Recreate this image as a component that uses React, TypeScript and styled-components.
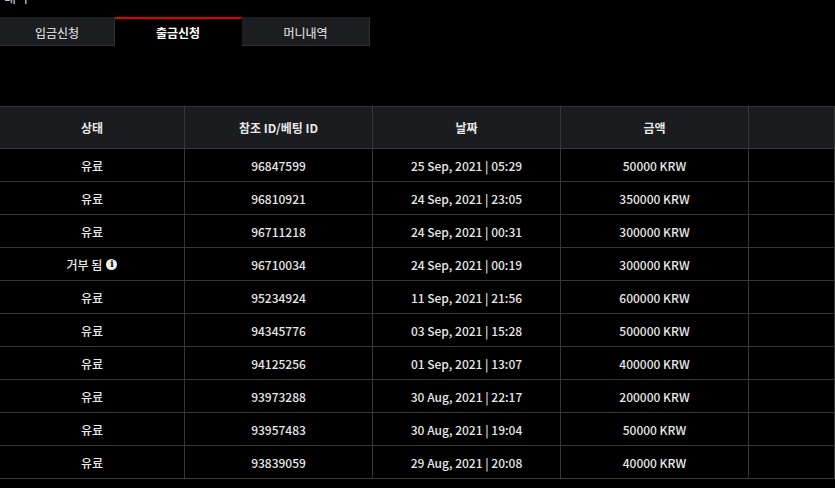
import React from "react";
import styled, { createGlobalStyle } from "styled-components";

const Global = createGlobalStyle`
  body {
    margin: 0;
    background: #000;
    font-family: "Noto Sans CJK KR", "Noto Sans", sans-serif;
    color: #e6e6e6;
  }
`;

const Title = styled.div`
  overflow: hidden;
  font-size: 13px;
  line-height: 1;
  margin-top: -10px;
  padding-left: 4px;
  height: 27px;
  color: #ddd;
`;

const Tabs = styled.div`
  display: flex;
  height: 29px;
  background: #000;
`;

const Tab = styled.div<{ $active?: boolean; $w: number }>`
  width: ${({ $w }) => $w}px;
  box-sizing: border-box;
  display: flex;
  align-items: center;
  justify-content: center;
  font-size: 12px;
  font-weight: ${({ $active }) => ($active ? 700 : 500)};
  color: ${({ $active }) => ($active ? "#fff" : "#d0d0d0")};
  background: ${({ $active }) => ($active ? "#000" : "#1c1d21")};
  border-top: 2px solid ${({ $active }) => ($active ? "#e00000" : "#1c1d21")};
  border-right: 1px solid ${({ $active }) => ($active ? "transparent" : "#333")};
  border-bottom: 1px solid ${({ $active }) => ($active ? "#000" : "#333")};
`;

const Spacer = styled.div`
  height: 60px;
`;

const Table = styled.div`
  display: grid;
  grid-template-columns: 185px 188px 188px 188px 1fr;
`;

const Cell = styled.div<{ $head?: boolean }>`
  box-sizing: border-box;
  height: ${({ $head }) => ($head ? 43 : 33)}px;
  display: flex;
  align-items: center;
  justify-content: center;
  gap: 4px;
  font-size: 12px;
  font-weight: ${({ $head }) => ($head ? 700 : 500)};
  background: ${({ $head }) => ($head ? "#1b1c20" : "#000")};
  color: #e8e8e8;
  border-bottom: 1px solid #363636;
  border-right: 1px solid #363636;
  border-top: ${({ $head }) => ($head ? "1px solid #363636" : "none")};
`;

const Info = styled.span`
  width: 11px;
  height: 11px;
  border-radius: 50%;
  background: #eee;
  color: #000;
  font-size: 9px;
  font-weight: 700;
  font-family: "DejaVu Serif", serif;
  display: inline-flex;
  align-items: center;
  justify-content: center;
`;

const rows: [string, string, string, string][] = [
  ["유료", "96847599", "25 Sep, 2021 | 05:29", "50000 KRW"],
  ["유료", "96810921", "24 Sep, 2021 | 23:05", "350000 KRW"],
  ["유료", "96711218", "24 Sep, 2021 | 00:31", "300000 KRW"],
  ["거부 됨", "96710034", "24 Sep, 2021 | 00:19", "300000 KRW"],
  ["유료", "95234924", "11 Sep, 2021 | 21:56", "600000 KRW"],
  ["유료", "94345776", "03 Sep, 2021 | 15:28", "500000 KRW"],
  ["유료", "94125256", "01 Sep, 2021 | 13:07", "400000 KRW"],
  ["유료", "93973288", "30 Aug, 2021 | 22:17", "200000 KRW"],
  ["유료", "93957483", "30 Aug, 2021 | 19:04", "50000 KRW"],
  ["유료", "93839059", "29 Aug, 2021 | 20:08", "40000 KRW"],
];

export default function App() {
  return (
    <>
      <Global />
      <Title>내역</Title>
      <Tabs>
        <Tab $w={115}>입금신청</Tab>
        <Tab $w={127} $active>출금신청</Tab>
        <Tab $w={128}>머니내역</Tab>
      </Tabs>
      <Spacer />
      <Table>
        {["상태", "참조 ID/베팅 ID", "날짜", "금액", ""].map((h, i) => (
          <Cell $head key={i}>{h}</Cell>
        ))}
        {rows.map((r) => (
          <React.Fragment key={r[1]}>
            <Cell>
              {r[0]}
              {r[0] !== "유료" && <Info>i</Info>}
            </Cell>
            <Cell>{r[1]}</Cell>
            <Cell>{r[2]}</Cell>
            <Cell>{r[3]}</Cell>
            <Cell />
          </React.Fragment>
        ))}
      </Table>
    </>
  );
}
